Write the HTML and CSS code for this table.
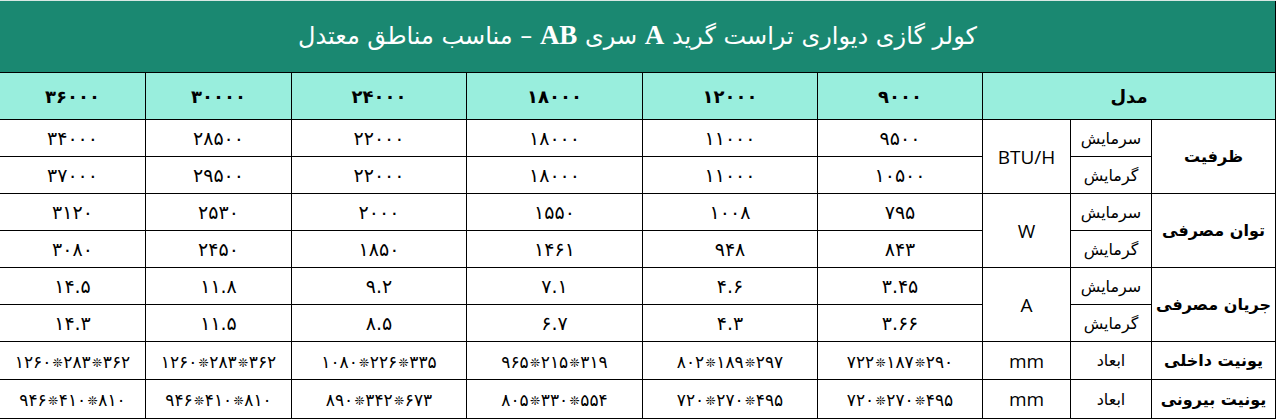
FILE: index.html
```html
<!DOCTYPE html>
<html lang="fa" dir="rtl">
<head>
<meta charset="utf-8">
<title>کولر گازی دیواری تراست</title>
<link rel="stylesheet" href="styles.css">
</head>
<body>
<table class="spec">
  <colgroup>
    <col class="c-label">
    <col class="c-sub">
    <col class="c-unit">
    <col class="c-9">
    <col class="c-12">
    <col class="c-18">
    <col class="c-24">
    <col class="c-30">
    <col class="c-36">
  </colgroup>
  <thead>
    <tr class="title-row">
      <th colspan="9" class="title">کولر گازی دیواری تراست گرید <span class="latin">A</span> سری <span class="latin">AB</span> – مناسب مناطق معتدل</th>
    </tr>
    <tr class="head-row">
      <th colspan="3">مدل</th>
      <th>۹۰۰۰</th>
      <th>۱۲۰۰۰</th>
      <th>۱۸۰۰۰</th>
      <th>۲۴۰۰۰</th>
      <th>۳۰۰۰۰</th>
      <th>۳۶۰۰۰</th>
    </tr>
  </thead>
  <tbody>
    <tr>
      <td rowspan="2" class="label">ظرفیت</td>
      <td class="sub">سرمایش</td>
      <td rowspan="2" class="unit">BTU/H</td>
      <td>۹۵۰۰</td><td>۱۱۰۰۰</td><td>۱۸۰۰۰</td><td>۲۲۰۰۰</td><td>۲۸۵۰۰</td><td>۳۴۰۰۰</td>
    </tr>
    <tr>
      <td class="sub">گرمایش</td>
      <td>۱۰۵۰۰</td><td>۱۱۰۰۰</td><td>۱۸۰۰۰</td><td>۲۲۰۰۰</td><td>۲۹۵۰۰</td><td>۳۷۰۰۰</td>
    </tr>
    <tr>
      <td rowspan="2" class="label">توان مصرفی</td>
      <td class="sub">سرمایش</td>
      <td rowspan="2" class="unit">W</td>
      <td>۷۹۵</td><td>۱۰۰۸</td><td>۱۵۵۰</td><td>۲۰۰۰</td><td>۲۵۳۰</td><td>۳۱۲۰</td>
    </tr>
    <tr>
      <td class="sub">گرمایش</td>
      <td>۸۴۳</td><td>۹۴۸</td><td>۱۴۶۱</td><td>۱۸۵۰</td><td>۲۴۵۰</td><td>۳۰۸۰</td>
    </tr>
    <tr>
      <td rowspan="2" class="label">جریان مصرفی</td>
      <td class="sub">سرمایش</td>
      <td rowspan="2" class="unit">A</td>
      <td>۳.۴۵</td><td>۴.۶</td><td>۷.۱</td><td>۹.۲</td><td>۱۱.۸</td><td>۱۴.۵</td>
    </tr>
    <tr>
      <td class="sub">گرمایش</td>
      <td>۳.۶۶</td><td>۴.۳</td><td>۶.۷</td><td>۸.۵</td><td>۱۱.۵</td><td>۱۴.۳</td>
    </tr>
    <tr class="dim-row">
      <td class="label">یونیت داخلی</td>
      <td class="sub">ابعاد</td>
      <td class="unit">mm</td>
      <td><span class="dim" dir="ltr">۷۲۲<i>❊</i>۱۸۷<i>❊</i>۲۹۰</span></td>
      <td><span class="dim" dir="ltr">۸۰۲<i>❊</i>۱۸۹<i>❊</i>۲۹۷</span></td>
      <td><span class="dim" dir="ltr">۹۶۵<i>❊</i>۲۱۵<i>❊</i>۳۱۹</span></td>
      <td><span class="dim" dir="ltr">۱۰۸۰<i>❊</i>۲۲۶<i>❊</i>۳۳۵</span></td>
      <td><span class="dim" dir="ltr">۱۲۶۰<i>❊</i>۲۸۳<i>❊</i>۳۶۲</span></td>
      <td><span class="dim" dir="ltr">۱۲۶۰<i>❊</i>۲۸۳<i>❊</i>۳۶۲</span></td>
    </tr>
    <tr class="dim-row last">
      <td class="label">یونیت بیرونی</td>
      <td class="sub">ابعاد</td>
      <td class="unit">mm</td>
      <td><span class="dim" dir="ltr">۷۲۰<i>❊</i>۲۷۰<i>❊</i>۴۹۵</span></td>
      <td><span class="dim" dir="ltr">۷۲۰<i>❊</i>۲۷۰<i>❊</i>۴۹۵</span></td>
      <td><span class="dim" dir="ltr">۸۰۵<i>❊</i>۳۳۰<i>❊</i>۵۵۴</span></td>
      <td><span class="dim" dir="ltr">۸۹۰<i>❊</i>۳۴۲<i>❊</i>۶۷۳</span></td>
      <td><span class="dim" dir="ltr">۹۴۶<i>❊</i>۴۱۰<i>❊</i>۸۱۰</span></td>
      <td><span class="dim" dir="ltr">۹۴۶<i>❊</i>۴۱۰<i>❊</i>۸۱۰</span></td>
    </tr>
  </tbody>
</table>
</body>
</html>
```
FILE: styles.css
```css
html, body {
  margin: 0;
  padding: 0;
  background: #ffffff;
}

body {
  font-family: "DejaVu Sans", "Noto Sans", sans-serif;
  color: #000000;
}

.spec {
  width: 1276px;
  border-collapse: collapse;
  table-layout: fixed;
}

.c-label { width: 124px; }
.c-sub { width: 81px; }
.c-unit { width: 88px; }
.c-9 { width: 165px; }
.c-12 { width: 175px; }
.c-18 { width: 176px; }
.c-24 { width: 175px; }
.c-30 { width: 146px; }
.c-36 { width: 146px; }

.spec th,
.spec td {
  border: 1px solid #000000;
  padding: 0;
  text-align: center;
  vertical-align: middle;
}

.title-row { height: 72px; }

.spec th.title {
  background: #1a8871;
  color: #ffffff;
  font-size: 24px;
  font-weight: normal;
  border-top: 1px solid #d8e8e4;
  padding-bottom: 3px;
}

.title .latin {
  font-family: "Liberation Serif", serif;
  font-weight: bold;
  font-size: 27px;
}

.head-row { height: 47px; }

.head-row th {
  background: #99eedd;
  font-size: 18px;
  font-weight: bold;
}

.spec tbody tr { height: 37px; }
.spec tbody tr.dim-row { height: 38px; }
.spec tbody tr.dim-row.last { height: 39px; }

.spec td {
  font-size: 19px;
}

.spec td.label {
  font-size: 16px;
  font-weight: bold;
}

.spec td.sub {
  font-size: 16px;
}

.spec td.unit {
  font-family: "Open Sans", "Liberation Sans", sans-serif;
  font-size: 19px;
}

.dim {
  unicode-bidi: isolate;
  white-space: nowrap;
  font-size: 17px;
}

.dim i {
  font-style: normal;
  font-size: 12px;
  padding: 0 1px;
  vertical-align: 1px;
}
```
